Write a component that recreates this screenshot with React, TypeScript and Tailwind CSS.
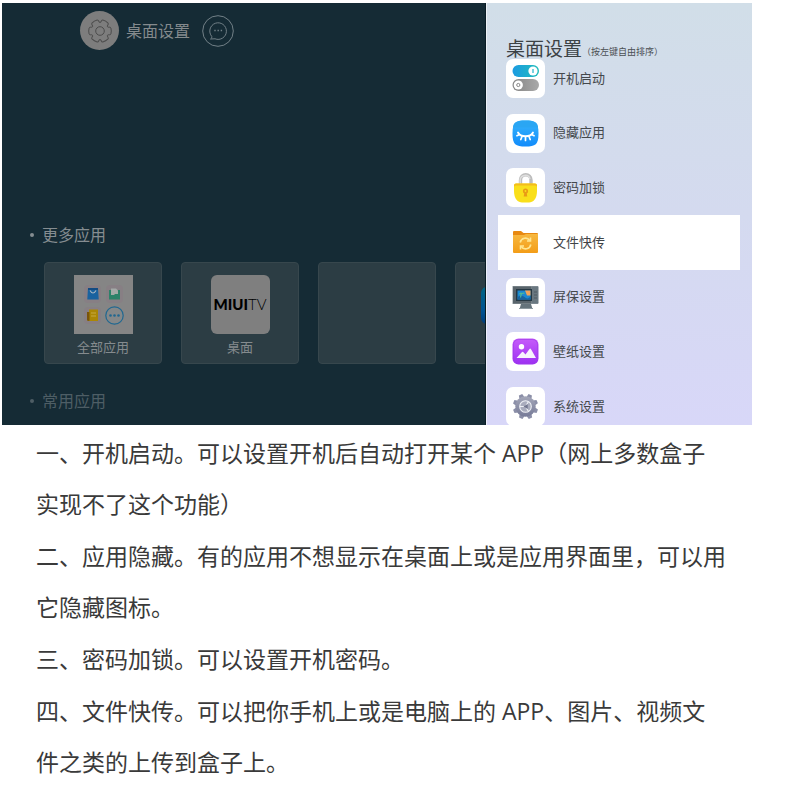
import { useState } from "react";

const menuItems = [
  { label: "开机启动", icon: <SwitchIcon /> },
  { label: "隐藏应用", icon: <HideIcon /> },
  { label: "密码加锁", icon: <LockIcon /> },
  { label: "文件快传", icon: <FolderIcon /> },
  { label: "屏保设置", icon: <ScreenIcon /> },
  { label: "壁纸设置", icon: <WallpaperIcon /> },
  { label: "系统设置", icon: <SystemIcon /> },
];

const notes = [
  "一、开机启动。可以设置开机后自动打开某个 APP（网上多数盒子实现不了这个功能）",
  "二、应用隐藏。有的应用不想显示在桌面上或是应用界面里，可以用它隐藏图标。",
  "三、密码加锁。可以设置开机密码。",
  "四、文件快传。可以把你手机上或是电脑上的 APP、图片、视频文件之类的上传到盒子上。",
];

function SwitchIcon() {
  return (
    <svg viewBox="0 0 39 39" className="size-full">
      <defs>
        <linearGradient id="swOn">
          <stop offset="0" stopColor="#1b9be2" />
          <stop offset="1" stopColor="#22bdbb" />
        </linearGradient>
        <linearGradient id="swOff">
          <stop offset="0" stopColor="#858585" />
          <stop offset="1" stopColor="#a9a9a9" />
        </linearGradient>
      </defs>
      <rect x="6.5" y="6" width="26.5" height="12" rx="6" fill="url(#swOn)" />
      <circle cx="27" cy="12" r="4.6" fill="#fff" />
      <path d="M27 10v4" stroke="#22b2cb" strokeWidth="1.2" />
      <rect x="6.5" y="20" width="26.5" height="12" rx="6" fill="url(#swOff)" />
      <circle cx="12.3" cy="26" r="4.6" fill="#fff" />
      <circle cx="12.3" cy="26" r="1.6" fill="none" stroke="#888" />
    </svg>
  );
}

function HideIcon() {
  return (
    <svg viewBox="0 0 39 39" className="size-full">
      <defs>
        <linearGradient id="hide" x2="0" y2="1">
          <stop offset="0" stopColor="#37b5fb" />
          <stop offset="1" stopColor="#118bfb" />
        </linearGradient>
      </defs>
      <path
        d="M19.5 6.5c10 0 13 2 13 13s-3 13-13 13-13-2-13-13 3-13 13-13z"
        fill="url(#hide)"
      />
      <path d="M7 13.500c.5-5.500 4-7 12.500-7S31.500 8 32 13.500z" fill="#2aa6f3" />
      <g fill="none" stroke="#fff" strokeLinecap="round">
        <path d="M12 18.500c2.500 5 12.500 5 15 0" strokeWidth="1.900" />
        <path
          d="M13.500 20.500l-2.600 1.200M16 22.500l-1.200 3M19.500 23.200v3.300M23 22.500l1.200 3M25.500 20.500l2.600 1.200"
          strokeWidth="1.700"
        />
      </g>
    </svg>
  );
}

function LockIcon() {
  return (
    <svg viewBox="0 0 39 39" className="size-full">
      <path d="M14.500 17v-5a5 5 0 0 1 10.500 0v5" fill="none" stroke="#bdbdbd" strokeWidth="3.400" />
      <path d="M14.200 17v-5a5 5 0 0 1 9.800-1" fill="none" stroke="#dedede" strokeWidth="1.500" />
      <path
        d="M10 15.500h19q2 0 2 2v5.500c0 8-4 11.500-8 11.500h-7c-4 0-8-3.500-8-11.500v-5.500q0-2 2-2z"
        fill="#f9df1b"
      />
      <path d="M8 19v-1.500q0-2 2-2h19q2 0 2 2V19q0-1.500-2-1.500H10q-2 0-2 1.500z" fill="#f3bc1c" />
      <circle cx="19.500" cy="23" r="2.600" fill="#e99b16" />
      <path d="M18.500 24h2l.8 4.500h-3.600z" fill="#e99b16" />
      <circle cx="19.500" cy="23" r=".9" fill="#f9df1b" />
    </svg>
  );
}

function FolderIcon() {
  return (
    <svg viewBox="0 0 39 39" className="size-full">
      <defs>
        <linearGradient id="folder" x2="0" y2="1">
          <stop offset="0" stopColor="#f7b840" />
          <stop offset="1" stopColor="#f39d18" />
        </linearGradient>
      </defs>
      <path d="M7 9q0-1 1-1h7l2.500 2H31q1 0 1 1v18H7z" fill="#e88911" />
      <path d="M7 12h11l2-1h12v18q0 1-1 1H8q-1 0-1-1z" fill="url(#folder)" />
      <g fill="none" stroke="#ffe691" strokeWidth="1.600">
        <path d="M14.200 19.500a5.300 5.300 0 0 1 9.600-2M24.800 21.500a5.300 5.300 0 0 1-9.600 2" />
        <path d="M24.500 14.500V18h-3.500M14.500 26.500V23H18" />
      </g>
    </svg>
  );
}

function ScreenIcon() {
  return (
    <svg viewBox="0 0 39 39" className="size-full">
      <path d="M6.500 8H32v18H6.500z" fill="#8d989e" />
      <path d="M7 8.500h18.500v17H7z" fill="#59646b" />
      <path d="M26 8.500h6.500v17H26z" fill="#697780" />
      <path d="M10 11h16v12H10z" fill="#263844" />
      <path d="M11.500 12.500h13v9h-13z" fill="#1b88d2" />
      <path d="M19 12.500h5.500v5H21z" fill="#f1a35a" />
      <path d="M11.500 19q4-3 7 0t6-.5v3h-13z" fill="#19649f" />
      <path d="M12.500 16.500q2-3 3.500-1.500 2-1 3 .5l-3 .5-1 3.500H14l.5-3.500z" fill="#52b896" />
      <path d="M28 14h3M28 17h3M28 20h3" stroke="#4e5b63" />
      <path d="M15 26h10l1.500 5h-13z" fill="#65737b" />
      <path d="M13 30h14v1H13z" fill="#8d999f" />
    </svg>
  );
}

function WallpaperIcon() {
  return (
    <svg viewBox="0 0 39 39" className="size-full">
      <defs>
        <linearGradient id="wall" x2="0" y2="1">
          <stop offset="0" stopColor="#c65cfa" />
          <stop offset="1" stopColor="#9c2ff2" />
        </linearGradient>
      </defs>
      <rect x="6.500" y="6.500" width="26" height="26" rx="6" fill="url(#wall)" />
      <rect x="7.500" y="7.500" width="24" height="24" rx="5" fill="none" stroke="#9d3be8" strokeWidth=".6" />
      <circle cx="15.500" cy="14.800" r="2.700" fill="#fff" />
      <path d="M10.500 26l5.500-6q.6-.6 1.200 0l2.300 2.500 4-5.500q.7-.8 1.400 0L30 26z" fill="#f7f2fc" />
    </svg>
  );
}

function SystemIcon() {
  return (
    <svg viewBox="0 0 39 39" className="size-full">
      <defs>
        <linearGradient id="sys" x2="0" y2="1">
          <stop offset="0" stopColor="#a3a6b8" />
          <stop offset="1" stopColor="#777b98" />
        </linearGradient>
      </defs>
      <g fill="#8b8fa8">
        {[22, 67, 112, 157, 202, 247, 292, 337].map((deg) => (
          <path key={deg} d="M16.700 11l1-4.200h3.600l1 4.200z" transform={`rotate(${deg} 19.500 19.500)`} />
        ))}
      </g>
      <circle cx="19.500" cy="19.500" r="10.200" fill="url(#sys)" />
      <circle cx="19.500" cy="19.500" r="5.800" fill="#a9acbd" stroke="#eef0f5" strokeWidth="1.100" />
      <path d="M19.500 19.500l3-5M19.500 19.500l3 5M19.500 19.500h-5.500" stroke="#eef0f5" strokeWidth="1.200" />
      <path d="M17.500 19.500l4.200-2.600v5.200z" fill="#72768f" />
    </svg>
  );
}

function GearIcon() {
  return (
    <svg viewBox="-12 -12 24 24" className="size-6" fill="none" stroke="#4c4c4c">
      {[0, 60, 120, 180, 240, 300].map((deg) => (
        <path
          key={deg}
          d="M7.400-4.300C8.200-3 10.300-4.800 10.900-3Q11.700 0 10.900 3C10.300 4.800 8.200 3 7.400 4.300"
          transform={`rotate(${deg})`}
        />
      ))}
      <circle r="4.300" />
    </svg>
  );
}

function AllAppsIcon() {
  return (
    <svg viewBox="0 0 59 59" className="size-[59px]">
      <path d="M0 0h59v59H0z" fill="#858585" />
      <g fill="#877f84">
        <rect x="10" y="10" width="17" height="18" rx="4" />
        <rect x="32" y="10" width="17" height="18" rx="4" />
        <rect x="10" y="32" width="17" height="17" rx="4" />
      </g>
      <path d="M14 13h10l.7 11.500H13.300z" fill="#19629f" />
      <path d="M14 13h10v2H14z" fill="#134b82" />
      <path d="M16 15.500q3 5 6 0" fill="none" stroke="#a7b5c2" strokeWidth="1.200" />
      <path d="M35 15h11v9.500H35z" fill="#2d8269" />
      <path d="M37 13.500h5l2 2V19h-3l-1 1h-3z" fill="#a4aaa7" />
      <path d="M15 34.500h9V46H14l-1-1v-8h2z" fill="#ab8705" />
      <path d="M13 37h2.500v8.500L14 46l-1-1z" fill="#79540a" />
      <path d="M17 38h5M17 41h5" stroke="#c5a944" />
      <circle cx="40.500" cy="40.500" r="8.700" fill="#858889" stroke="#206891" strokeWidth="1.200" />
      <g fill="#206891">
        <circle cx="36.500" cy="40.500" r="1.300" />
        <circle cx="40.500" cy="40.500" r="1.300" />
        <circle cx="44.500" cy="40.500" r="1.300" />
      </g>
    </svg>
  );
}

function MiuiIcon() {
  return (
    <span className="flex size-[59px] items-center justify-center rounded-md bg-[#7f7f7f] font-['Lato'] text-[15px] leading-none text-black">
      <span className="font-black">MIUI</span>
      <span className="font-light">TV</span>
    </span>
  );
}

function AppCard({ label, children }: { label?: string; children?: React.ReactNode }) {
  return (
    <button
      aria-label={label || "空"}
      className="flex h-[102px] w-[118px] shrink-0 flex-col items-center rounded-[4px] border border-[#37474d] bg-[#2c3d44] pt-3 text-[13px] leading-5 text-[#858b8e]"
    >
      {children}
      {label && <span className="mt-[3px]">{label}</span>}
    </button>
  );
}

function Launcher() {
  return (
    <div className="min-w-0 flex-1 overflow-hidden border-r border-[#091c25] bg-[#152b35]">
      <header className="flex items-center pt-2 pl-[78px] text-[#848a8d]">
        <button className="flex items-center gap-[7px] text-[16px]">
          <span className="flex size-[39px] items-center justify-center rounded-full bg-[#7d7d7d]">
            <GearIcon />
          </span>
          <span>桌面设置</span>
        </button>
        <button aria-label="消息" className="ml-3 size-8">
          <svg viewBox="0 0 32 32" fill="none" stroke="#728087">
            <circle cx="16" cy="16" r="15.300" />
            <path d="M9.800 21.500A8.300 8.300 0 1 1 13 23.800l-4.500.2q1.800-1 1.300-2.500z" />
            <path d="M12.300 15.500h1.400M15.500 15.500h1.400M18.700 15.500h1.400" strokeWidth="1.300" />
          </svg>
        </button>
      </header>

      <section className="mt-[173px]">
        <h2 className="flex items-center gap-2 pl-7 text-[16px] leading-6 text-[#858d91]">
          <span className="size-1 rounded-full bg-[#858d91]" />
          更多应用
        </h2>
        <div className="mt-[15px] flex gap-[19px] pl-[42px]">
          <AppCard label="全部应用">
            <AllAppsIcon />
          </AppCard>
          <AppCard label="桌面">
            <MiuiIcon />
          </AppCard>
          <AppCard />
          <AppCard>
            <span className="mt-3 h-[37px] w-[66px] rounded-md bg-linear-to-b from-[#006383] via-[#005291] via-65% to-[#003c77]" />
          </AppCard>
        </div>
      </section>

      <h2 className="mt-[25px] flex items-center gap-2 pl-7 text-[16px] leading-6 text-[#4e5e65]">
        <span className="size-1 rounded-full bg-[#4e5e65]" />
        常用应用
      </h2>
    </div>
  );
}

export default function App() {
  const [selected, setSelected] = useState(3);

  return (
    <main className="min-h-screen bg-white font-['Open_Sans','Noto_Sans_CJK_SC',sans-serif]">
      <div className="mt-[3px] ml-0.5 flex h-[422px] max-w-[750px] overflow-hidden">
        <Launcher />

        <aside className="w-[266px] shrink-0 border-l border-white/60 bg-linear-to-b from-[#d1dee8] via-[#d4daef] via-50% to-[#d8d7f8] pr-3 pl-[11px] pt-[34px]">
          <h1 className="-mb-[10px] flex h-6 items-center pl-2 text-[19px] text-[#3c4245]">
            桌面设置
            <small className="pt-1.5 text-[9px] text-[#4b5053]">（按左键自由排序）</small>
          </h1>
          <nav className="grid h-[383px] auto-rows-fr">
            {menuItems.map((item, i) => (
              <button
                key={item.label}
                onClick={() => setSelected(i)}
                className={
                  i === selected
                    ? "flex items-center gap-2 bg-white pl-2 text-[13px] text-[#3f4346]"
                    : "flex items-center gap-2 pl-2 text-[13px] text-[#44484c]"
                }
              >
                <span className="size-[39px] rounded-[7px] bg-white">{item.icon}</span>
                {item.label}
              </button>
            ))}
          </nav>
        </aside>
      </div>

      <article className="flex max-w-[726px] flex-col gap-px pt-[3px] pl-9 text-[23px] leading-[51px] text-[#3a3a3a]">
        {notes.map((note) => (
          <p key={note}>{note}</p>
        ))}
      </article>
    </main>
  );
}
